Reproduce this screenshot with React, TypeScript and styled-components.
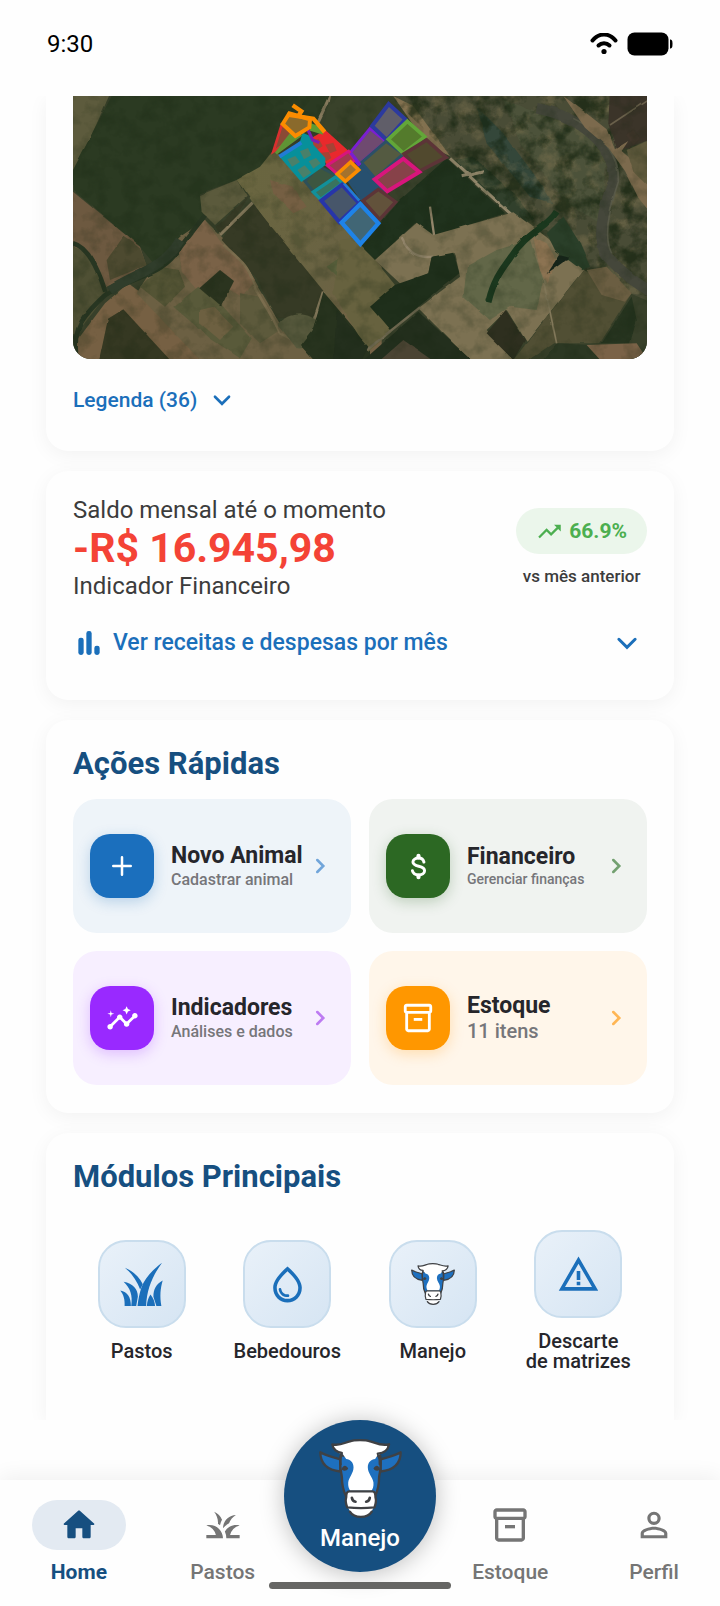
import React from "react";
import styled, { createGlobalStyle } from "styled-components";
import {
  MdGrass,
  MdInsights,
  MdOutlineInventory2,
  MdOutlineWaterDrop,
  MdPersonOutline,
  MdTrendingUp,
  MdWarningAmber,
} from "react-icons/md";

const GlobalStyle = createGlobalStyle`
  * {
    box-sizing: border-box;
  }
  body {
    margin: 0;
    background: #fefefe;
    color: #26262b;
    font-family: Roboto, "Liberation Sans", sans-serif;
  }
  h2, p {
    margin: 0;
  }
  button {
    border: 0;
    padding: 0;
    background: none;
    color: inherit;
    font: inherit;
    text-align: left;
    cursor: pointer;
  }
  a {
    color: inherit;
    text-decoration: none;
  }
  svg {
    display: block;
    flex-shrink: 0;
  }
`;

const Screen = styled.div`
  display: flex;
  flex-direction: column;
  min-height: 100vh;
`;

const StatusBar = styled.header`
  display: flex;
  align-items: center;
  justify-content: space-between;
  height: 96px;
  padding: 0 47px 8px;
  color: #000;
  font-size: 24px;
`;

const StatusIcons = styled.div`
  display: flex;
  align-items: center;
  gap: 9px;
`;

const Content = styled.main`
  flex: 1;
  display: flex;
  flex-direction: column;
  gap: 20px;
  padding: 0 46px;
  overflow: hidden;
`;

const Card = styled.section`
  padding: 26px 27px 28px;
  border-radius: 22px;
  background: #fefefe;
  box-shadow: 0 4px 20px rgba(0, 0, 0, 0.05);
`;

const MapCard = styled(Card)`
  padding-top: 0;
  padding-bottom: 36px;
  border-top-left-radius: 0;
  border-top-right-radius: 0;
`;

const BalanceCard = styled(Card)`
  padding-top: 25px;
  padding-bottom: 40px;
`;

const ModulesCard = styled(Card)`
  flex: 1;
  border-bottom-left-radius: 0;
  border-bottom-right-radius: 0;
`;

const MapFrame = styled.div`
  overflow: hidden;
  border-radius: 0 0 18px 18px;
  svg {
    width: 100%;
    height: auto;
  }
`;

const LegendButton = styled.button`
  display: flex;
  align-items: center;
  gap: 12px;
  margin-top: 26px;
  color: #1b6fba;
  font-size: 21px;
  font-weight: 500;
  line-height: 30px;
`;

const Balance = styled.div`
  display: flex;
  align-items: center;
  justify-content: space-between;
  color: #3c3c3c;
  font-size: 24px;
  line-height: 28px;
`;

const Amount = styled.p`
  color: #f44336;
  font-size: 41px;
  font-weight: 700;
  line-height: 48px;
`;

const Trend = styled.div`
  display: flex;
  flex-direction: column;
  align-items: center;
  gap: 8px;
  padding-top: 2px;
  font-size: 17px;
  font-weight: 500;
`;

const TrendBadge = styled.div`
  display: flex;
  align-items: center;
  gap: 6px;
  height: 46px;
  padding: 0 20px;
  border-radius: 23px;
  background: #ebf6eb;
  color: #4caf50;
  font-size: 21px;
  font-weight: 700;
`;

const DetailsButton = styled.button`
  display: flex;
  align-items: center;
  gap: 8px;
  width: 100%;
  margin-top: 26px;
  padding-right: 5px;
  color: #1b6fba;
  font-size: 23px;
  font-weight: 500;
  line-height: 34px;
  span {
    flex: 1;
  }
`;

const Heading = styled.h2`
  color: #164f80;
  font-size: 31px;
  font-weight: 700;
  line-height: 35px;
`;

const ActionGrid = styled.div`
  display: grid;
  grid-template-columns: repeat(2, minmax(0, 1fr));
  gap: 18px;
  margin-top: 18px;
`;

const Action = styled.button<{ $tint: string }>`
  display: flex;
  align-items: center;
  height: 134px;
  padding: 0 18px 0 17px;
  border-radius: 24px;
  background: ${({ $tint }) => $tint};
`;

const ActionIcon = styled.span<{ $color: string }>`
  display: flex;
  align-items: center;
  justify-content: center;
  width: 64px;
  height: 64px;
  margin-right: 17px;
  flex-shrink: 0;
  border-radius: 20px;
  background: ${({ $color }) => $color};
  box-shadow: 0 4px 14px ${({ $color }) => $color}40;
  color: #fff;
`;

const ActionText = styled.span`
  flex: 1;
  display: flex;
  flex-direction: column;
  white-space: nowrap;
`;

const ActionTitle = styled.span`
  font-size: 23px;
  font-weight: 700;
  line-height: 26px;
`;

const ActionNote = styled.span<{ $size: number }>`
  color: #76767a;
  font-size: ${({ $size }) => $size}px;
  font-weight: 500;
  line-height: ${({ $size }) => $size + 5}px;
`;

const ModuleList = styled.div`
  display: grid;
  grid-template-columns: repeat(4, 1fr);
  align-items: center;
  margin: 36px -4px 0;
`;

const Module = styled.a`
  display: flex;
  flex-direction: column;
  align-items: center;
  gap: 13px;
  font-size: 20px;
  font-weight: 500;
  line-height: 20px;
  text-align: center;
  white-space: pre-line;
`;

const ModuleIcon = styled.span`
  display: flex;
  align-items: center;
  justify-content: center;
  width: 88px;
  height: 88px;
  border: 2px solid #c9dded;
  border-radius: 28px;
  background: linear-gradient(135deg, #e9f1f9, #d6e5f3);
  color: #1b6fba;
`;

const BottomArea = styled.footer`
  position: relative;
  padding-top: 60px;
`;

const NavBar = styled.nav`
  height: 126px;
  overflow: hidden;
  background: #fefefe;
  box-shadow: 0 -4px 20px rgba(0, 0, 0, 0.06);
`;

const NavItems = styled.div`
  display: grid;
  grid-template-columns: repeat(5, 1fr);
  margin: 0 -6px 0 7px;
  padding-top: 20px;
`;

const NavLink = styled.a<{ $active?: boolean }>`
  display: flex;
  flex-direction: column;
  align-items: center;
  gap: 10px;
  color: ${({ $active }) => ($active ? "#164f80" : "#757575")};
  font-size: 21px;
  font-weight: ${({ $active }) => ($active ? 700 : 500)};
  line-height: 24px;
`;

const NavIcon = styled.span<{ $active?: boolean }>`
  display: flex;
  align-items: center;
  justify-content: center;
  width: 94px;
  height: 50px;
  border-radius: 25px;
  background: ${({ $active }) => ($active ? "#e3eaf2" : "transparent")};
`;

const ManejoButton = styled.button`
  position: absolute;
  top: 0;
  left: 50%;
  display: flex;
  flex-direction: column;
  align-items: center;
  gap: 4px;
  width: 152px;
  height: 152px;
  margin-left: -76px;
  padding-top: 17px;
  border-radius: 50%;
  background: #164f80;
  box-shadow: 0 2px 24px rgba(0, 0, 0, 0.26);
  color: #fff;
  font-size: 24px;
  font-weight: 500;
  line-height: 28px;
`;

const HomeIndicator = styled.div`
  position: absolute;
  bottom: 17px;
  left: 50%;
  width: 182px;
  height: 7px;
  margin-left: -91px;
  border-radius: 4px;
  background: #666664;
`;

type IconProps = { size: number };

const WifiIcon = () => (
  <svg width="28" height="22" viewBox="0 0 28 22" fill="none" stroke="#000" strokeWidth="4" strokeLinecap="round">
    <path d="M2.500 7.500C9-.5 19-.5 25.500 7.500" />
    <path d="M8.500 12.500C11.500 9.500 16.500 9.500 19.500 12.500" />
    <circle cx="14" cy="18.500" r="2.600" fill="#000" stroke="none" />
  </svg>
);

const BatteryIcon = () => (
  <svg width="46" height="24" viewBox="0 0 46 24">
    <rect x="0.500" y="0.500" width="41" height="23" rx="7" />
    <path d="M43 7.500c1.800 0 2.500 1 2.500 4.500s-.7 4.500-2.500 4.500z" />
  </svg>
);

const Chevron = ({ size, right, color = "currentColor" }: IconProps & { right?: boolean; color?: string }) => (
  <svg width={size} height={size} viewBox="0 0 24 24" fill="none" stroke={color} strokeWidth="2.400">
    <path d={right ? "M9.500 6.500 15 12l-5.500 5.500" : "M5.500 9l6.500 6.500L18.500 9"} strokeLinecap="round" />
  </svg>
);

const BarsIcon = ({ size }: IconProps) => (
  <svg width={size} height={size} viewBox="0 0 24 24" fill="currentColor">
    <rect x="4" y="8" width="4" height="13" rx="1.800" />
    <rect x="10" y="3" width="4" height="18" rx="1.800" />
    <rect x="16" y="14" width="4" height="7" rx="1.800" />
  </svg>
);

const PlusIcon = ({ size }: IconProps) => (
  <svg width={size} height={size} viewBox="0 0 24 24" stroke="currentColor" strokeWidth="2" strokeLinecap="round">
    <path d="M12 5v14M5 12h14" />
  </svg>
);

const DollarIcon = ({ size }: IconProps) => (
  <svg width={size} height={size} viewBox="0 0 24 24" fill="none" stroke="currentColor" strokeWidth="2.300" strokeLinecap="round">
    <path d="M16.200 8.600C15.800 6.800 14.200 5.500 12 5.500c-2.300 0-4.300 1.100-4.300 3.100 0 4.300 9 2.200 9 6.600 0 2-2 3.300-4.600 3.300-2.400 0-4.300-1.100-4.800-3.200" />
    <path d="M12 3.700v1.200M12 19.100v1.200" strokeWidth="3.200" />
  </svg>
);

const HomeIcon = ({ size }: IconProps) => (
  <svg width={size} height={size} viewBox="0 0 24 24" fill="currentColor">
    <path d="M10 19v-5h4v5c0 .55.45 1 1 1h3c.55 0 1-.45 1-1v-7h1.700c.46 0 .68-.57.33-.87L12.670 3.600c-.38-.34-.96-.34-1.340 0l-8.360 7.530c-.34.3-.13.87.33.87H5v7c0 .55.45 1 1 1h3c.55 0 1-.45 1-1z" />
  </svg>
);

const PastureIcon = ({ size }: IconProps) => (
  <svg width={size} height={size} viewBox="240 425 132 136" fill="currentColor">
    <path d="M368 427c-32 24-52 48-62 74-6 18-10 38-12 57h26c2-52 20-92 48-131z" />
    <path d="M256 442c25 10 43 29 54 50l-8 16c-10-26-25-48-46-66z" />
    <path d="M252 485c28 5 43 22 43 44l-5 29h-15c5-32-3-54-23-73z" />
    <path d="M242 511c22 4 32 20 32 47h-19c1-20-3-34-13-47z" />
    <path d="M370 481c-20 11-28 27-28 49l9 28h15c-5-30-3-53 4-77z" />
    <path d="M333 523c9 11 13 22 14 35h-25c1-13 4-24 11-35z" />
  </svg>
);

const CowIcon = ({ size }: IconProps) => (
  <svg width={size} height={size} viewBox="28 28 250 242" strokeLinecap="round" strokeLinejoin="round">
    <g fill="#1e70bf" stroke="#3f4144" strokeWidth="7">
      <path d="M94 92C75 84 55 84 32 70c0 32 18 53 60 58z" />
      <path d="M212 92c19-8 39-8 62-22 0 32-18 53-60 58z" />
      <path d="M94 80c-6 24 0 44 3 65 0 22 4 40 12 56h88c8-16 12-34 12-56 3-21 9-41 3-65z" />
    </g>
    <path
      d="M68 46c22 6 37-5 53-9 12-5 49-5 61 0 16 4 31 15 57 9-3 18-17 28-34 32l-8 12c-12 1-22 10-22 25 0 18 15 30 17 46 1 12-2 19-6 25h-64c-4-7-7-14-6-25 2-16 16-28 16-46 0-15-10-24-22-25l-10-14C86 74 73 64 68 46z"
      fill="#fff"
    />
    <path
      d="M93 106c-3-18 0-26 4-34-14-1-27-11-29-26 22 6 37-5 53-9 12-5 49-5 61 0 16 4 31 15 57 9-3 18-17 28-34 28 4 10 8 18 6 32"
      fill="none"
      stroke="#3f4144"
      strokeWidth="7"
    />
    <path d="M97 118c4-10 13-11 19 1-4 7-12 9-19 4zM211 118c-4-10-13-11-19 1 4 7 12 9 19 4z" fill="#3f4144" />
    <path d="M119 188h70c6 0 9 8 9 17 4 13 0 27-7 34-9 20-23 26-37 26s-28-6-37-26c-7-7-11-21-7-34 0-9 3-17 9-17z" fill="#fff" />
    <g fill="none" stroke="#3f4144" strokeWidth="7">
      <path d="M119 188h70c6 0 9 8 9 17 4 13 0 23-3 31-25 3-57 3-82 0-3-8-7-18-3-31 0-9 3-17 9-17z" />
      <path d="M121 249c13 21 53 21 66 0" />
      <path d="M127 207c1 7 5 11 11 12M181 207c-1 7-5 11-11 12" strokeWidth="8" />
    </g>
  </svg>
);

// Aerial view of the farm, with the fields drawn over the terrain.
const FarmMap = () => (
  <svg viewBox="99 48 1722 789" role="img" aria-label="Mapa da fazenda">
    <defs>
      <filter id="soften" x="0" y="0" width="100%" height="100%" colorInterpolationFilters="sRGB">
        <feTurbulence type="fractalNoise" baseFrequency="0.02" numOctaves="2" seed="4" result="n" />
        <feDisplacementMap in="SourceGraphic" in2="n" scale="8" xChannelSelector="R" yChannelSelector="G" />
        <feGaussianBlur stdDeviation="2" />
      </filter>
      <filter id="grain" x="0" y="0" width="100%" height="100%" colorInterpolationFilters="sRGB">
        <feTurbulence type="fractalNoise" baseFrequency="0.02" numOctaves="4" seed="8" />
        <feColorMatrix values="0 0 0 0 .08  0 0 0 0 .14  0 0 0 0 .06  3 0 0 0 -1.300" />
      </filter>
      <filter id="patches" x="0" y="0" width="100%" height="100%" colorInterpolationFilters="sRGB">
        <feTurbulence type="fractalNoise" baseFrequency="0.018" numOctaves="5" seed="21" />
        <feColorMatrix values="0 0 0 0 .52  0 0 0 0 .47  0 0 0 0 .33  0 4 0 0 -1.950" />
      </filter>
      <clipPath id="wood">
        <path d="M1050 48h771v600l-51-8-140-70-160-120-240-225z" />
      </clipPath>
      <linearGradient id="band" x1="0" y1="0" x2="1" y2="1">
        <stop offset="0" stopColor="#69663f" />
        <stop offset=".6" stopColor="#6a6343" />
        <stop offset="1" stopColor="#786246" />
      </linearGradient>
    </defs>
    <rect x="99" y="48" width="1722" height="789" fill="#38402a" />
    <g filter="url(#soften)">
      <rect x="80" y="30" width="1760" height="830" fill="#38402a" />
      <path d="M80 30h135L99 290H80z" fill="#5d5b3d" />
      <path d="M215 48h655l-40 80-140 92-30 45-70 35-110 40 10 70-60 60-90 80-40-50L99 330v-60z" fill="#2b3a22" />
      <path d="M99 335l201 165 20 60-130 62L80 470V335z" fill="#6d5940" />
      <path d="M250 470l50 35 20 50-110 45-10-60z" fill="#4d4a30" />
      <path d="M80 490l65 30 45 80 5 50-96 125z" fill="#4f5034" />
      <path d="M195 670l70-60 80 60 60 40 80 140H120l-15-60z" fill="#766043" />
      <path d="M250 688l148 160H176l28-132z" fill="#353822" />
      <path d="M340 560l80-90 75-50 110 110 50 90 70 120 130 100H480L290 640z" fill="#6c6043" />
      <path d="M415 490l80-70 50 70 70 60 30 50-40 50-60-35-70 20-50-60z" fill="#7a6247" />
      <path d="M300 620l60-60 55 10 20 50-60 60z" fill="#545435" />
      <path d="M400 680l75-60 70 55 90 100-35 60-90-60z" fill="#595a3a" />
      <path d="M480 690l40-10 60 60-40 40-60-50z" fill="#6d6041" />
      <path d="M540 570l42 33-39 77-65-55z" fill="#2b341f" />
      <path d="M600 640l60 10 60 100-60 40-60-60z" fill="#5d5a3c" />
      <path d="M480 345l110-45 30 50-95 85-40-40z" fill="#5b5a3c" />
      <path d="M590 300l70-40 45-55 20 25 300 330v290H990l-350-480z" fill="url(#band)" />
      <path d="M690 300l70 20 40 60-40 20-60-60z" fill="#755f43" />
      <path d="M860 560l70-50 90 90v100l-60-40z" fill="#59603c" />
      <path d="M625 350L530 440l12 22 95-92 213 262-30 80-110 3-60-120-105-115z" fill="#363a25" />
      <path d="M638 368L540 465M870 48l-35 75M850 635l-28 85-40 70" fill="none" stroke="#84785b" strokeWidth="9" />
      <path d="M550 495c50 45 75 60 90 115 25 60 50 80 80 150l60 30" fill="none" stroke="#7b6d4e" strokeWidth="8" />
      <path d="M715 735c30-45 100-40 125 0 5 40-30 75-70 70z" fill="#56583c" />
      <path d="M850 635l140 165v50H830l-50-55 40-50z" fill="#27331e" />
      <path d="M110 836c-15-90 20-130 85-190 80-60 170-50 230-150l70-90M99 490c40 10 70 60 97 145" fill="none" stroke="#283622" strokeWidth="14" />
      <path d="M210 630c70-50 160-60 210-150" fill="none" stroke="#303d2b" strokeWidth="28" />
      <path d="M870 48h190l-130 170-80-70z" fill="#39422a" />
      <g transform="translate(900 0)">
        <path d="M0 480l60-10 45 70 60 75-70 65 60 75-70 60L-20 640z" fill="#67623f" />
        <path d="M150 30h790v640l-70-30-140-70-110-120-50-5L330 230l-70-60z" fill="#494c36" />
        <path d="M120 430l60-70 140-125 175 165-215 68-55-38-120 110-45-45z" fill="#20321d" />
        <path d="M340 240l60-10 130 120 50 70-30 15z" fill="#31402c" />
        <path d="M490 60l120 40 110 20 80 110-20 200-100-60-140-180z" fill="#4c523a" />
        <path d="M410 80l80 80 90 120 60 90-70-20-130-160z" fill="#34473a" />
        <path d="M160 48l60 30 110 150-45-20-70-80z" fill="#82704f" />
      </g>
    </g>
    <g clipPath="url(#wood)">
      <rect x="99" y="48" width="1722" height="789" filter="url(#patches)" opacity=".42" />
      <rect x="99" y="48" width="1722" height="789" filter="url(#grain)" opacity=".6" />
    </g>
    <g filter="url(#soften)">
      <g transform="translate(900 0)">
        <path d="M590 85c130 25 235 110 232 215-40 100-50 190-20 230 50 55 90 80 130 105" fill="none" stroke="#45473b" strokeWidth="32" />
        <path d="M700 115c80 40 140 110 135 190-30 90-45 170-20 215" fill="none" stroke="#585948" strokeWidth="5" />
        <path d="M810 30h130v145l-110 40-25-85z" fill="#3b3429" />
        <path d="M810 135L920 62" stroke="#6a604b" strokeWidth="5" />
        <path d="M670 48l80 60 50 40 25 60 40-25-20 30 90 80v110l-40-50-40-80-50-70-70-60z" fill="#7c6a4d" />
        <path d="M860 210l80-35v160l-60-60z" fill="#605a3d" />
        <path d="M858 165l22-15 20 25-20 20z" fill="#3f352a" />
        <path d="M330 235l240 220M365 290l65-15" fill="none" stroke="#91866a" strokeWidth="9" />
        <path d="M105 540l125-112 50 37 240-68 100 75 110 98-170 215-60-95-60 60 80 90H390L235 685l125-95-15-70-70 10-10 50-80 35z" fill="#7c7152" />
        <path d="M380 560l90-50 100-30 40 120-20 90-80-10-60 40-80-70z" fill="#626748" />
        <path d="M580 470l40 20 30 50-30 70-20-40z" fill="#8c7352" />
        <path d="M185 475c20 45 50 60 95 55M270 380l12 85" fill="none" stroke="#94866b" strokeWidth="7" />
        <path d="M275 530l65-12 18 62-123 100-85 70-60-70 75-65 100-35z" fill="#1f2f1b" />
        <path d="M80 810L240 682" stroke="#706951" strokeWidth="7" />
        <path d="M235 695l170 155H60z" fill="#232f1d" />
        <path d="M190 780l100 70H110z" fill="#4b4433" />
        <path d="M-10 690l95 110-25 50h-80z" fill="#232f1d" />
        <path d="M497 690l58 90-35 60-80-80z" fill="#2e2f1f" />
        <path d="M620 460l50-50 50 80 30 70-25 10-80-60z" fill="#2a3f29" />
        <path d="M730 570l145 70-95 150H640l-90 60-30-10z" fill="#514f34" />
        <path d="M740 570l60-10 75 80-20 25-70-20z" fill="#6b5e42" />
        <path d="M875 650l15 70-20 70h-85z" fill="#26341f" />
        <path d="M650 790l90 5 50 55H600z" fill="#2c3823" />
        <path d="M740 795l150-5 40 60H790z" fill="#7a6247" />
        <path d="M610 600l40 190" stroke="#82785a" strokeWidth="5" />
        <path d="M650 395c-30 50-90 60-140 140-30 40-50 70-65 132" fill="none" stroke="#1b381e" strokeWidth="19" />
        <path d="M620 582l40-60 32 8z" fill="#17251a" />
      </g>
    </g>
    <rect x="99" y="48" width="1722" height="789" filter="url(#grain)" opacity=".22" />
    <g transform="translate(630 30)" strokeWidth="12" strokeLinejoin="miter">
      <path d="M95 105L70 185l75-50z" fill="#8a4a35" stroke="#d9302f" strokeWidth="8" />
      <path d="M78 190l72-53-22-12z" fill="#5f9434" stroke="#5f9434" strokeWidth="8" />
      <path d="M360 116l48 38-82 70-28-33z" fill="#6f4a70" stroke="#7b1fd0" strokeWidth="9" />
      <path d="M416 42l50 46-56 62-44-42z" fill="#605e69" stroke="#2c3a9e" />
      <path d="M408 154l52 38-84 74-42-48z" fill="#545a41" stroke="#2c5067" strokeWidth="9" />
      <path d="M472 94l52 46-64 50-45-42z" fill="#547b2c" stroke="#62a638" strokeWidth="11" />
      <path d="M530 150l58 52-80 42-46-52z" fill="#51492e" stroke="#5c3437" strokeWidth="11" />
      <path d="M340 224l36 44 36 32-72 36-50-72z" fill="#27506f" stroke="#28506e" strokeWidth="8" />
      <path d="M385 298l52 38-48 52-50-56z" fill="#62523b" stroke="#5c3437" strokeWidth="10" />
      <path d="M374 268l86-62 48 40-96 58z" fill="#874249" stroke="#d8157c" />
      <path d="M205 228l56 30-68 50-28-34z" fill="#3d5640" stroke="#2e5059" strokeWidth="9" />
      <path d="M258 260l20 20-66 48-22-22z" fill="#39735e" stroke="#12909a" strokeWidth="10" />
      <path d="M276 284l52 56-60 56-54-64z" fill="#47566a" stroke="#2735a9" />
      <path d="M282 280l46 52" stroke="#227bd5" strokeWidth="8" />
      <path d="M174 150l52-30 80 72-70 40-14-20z" fill="#e9292c" />
      <path d="M182 154l24-8 12 22-20 14zM226 164l24-6 10 24-20 8zM212 188l24-2 8 18-16 10z" fill="#a64335" />
      <path d="M232 226l64-42 20 26-54 42z" fill="#a2384f" stroke="#d8157c" strokeWidth="9" />
      <path d="M302 188l28 36" stroke="#7b1fd0" strokeWidth="10" />
      <path d="M302 216l24 24-40 34-24-22z" fill="#a4722d" stroke="#fb8c00" strokeWidth="11" />
      <path d="M158 128l28 12 4 24 36 40 0 22-72 50-64-74 60-48z" fill="#07909a" />
      <path d="M88 200l66-42" stroke="#227bd5" strokeWidth="12" />
      <path d="M112 208l24-10 14 18-24 14zM150 184l24-10 10 22-22 12zM142 240l22-14 20 22-24 16zM176 214l22-10 14 16-22 16z" fill="#49806a" />
      <path d="M174 120l14 30 20 8" fill="none" stroke="#7b1fb0" strokeWidth="9" />
      <path d="M180 98l30 12 10 24-40-12z" fill="#5d9b33" />
      <path d="M98 102l20-32 62 18-2 24-42 26z" fill="#8a6a2c" stroke="#fb8c00" strokeWidth="12" />
      <path d="M128 46l26 18-8 12M112 74l78 12 34 40" fill="none" stroke="#fb8c00" strokeWidth="13" />
      <path d="M331 342l54 58-54 62-56-64z" fill="#416675" stroke="#1e83e8" strokeWidth="13" />
    </g>
  </svg>
);

const actions = [
  { title: "Novo Animal", note: "Cadastrar animal", size: 16, color: "#1b6fbd", tint: "#eef4f9", arrow: "#71a5da", icon: <PlusIcon size={30} /> },
  { title: "Financeiro", note: "Gerenciar finanças", size: 14, color: "#2c6823", tint: "#f0f3f0", arrow: "#73a070", icon: <DollarIcon size={31} /> },
  { title: "Indicadores", note: "Análises e dados", size: 16, color: "#9929ff", tint: "#f7efff", arrow: "#bd7bf2", icon: <MdInsights size={33} /> },
  { title: "Estoque", note: "11 itens", size: 20, color: "#ff9700", tint: "#fff6ea", arrow: "#ffb654", icon: <MdOutlineInventory2 size={34} /> },
];

const modules = [
  { name: "Pastos", icon: <PastureIcon size={45} /> },
  { name: "Bebedouros", icon: <MdOutlineWaterDrop size={43} /> },
  { name: "Manejo", icon: <CowIcon size={44} /> },
  { name: "Descarte\nde matrizes", icon: <MdWarningAmber size={43} /> },
];

const App = () => {
  return (
    <Screen>
      <GlobalStyle />
      <StatusBar>
        <span>9:30</span>
        <StatusIcons>
          <WifiIcon />
          <BatteryIcon />
        </StatusIcons>
      </StatusBar>

      <Content>
        <MapCard>
          <MapFrame>
            <FarmMap />
          </MapFrame>
          <LegendButton type="button">
            Legenda (36)
            <Chevron size={26} />
          </LegendButton>
        </MapCard>

        <BalanceCard>
          <Balance>
            <div>
              <p>Saldo mensal até o momento</p>
              <Amount>-R$ 16.945,98</Amount>
              <p>Indicador Financeiro</p>
            </div>
            <Trend>
              <TrendBadge>
                <MdTrendingUp size={27} />
                66.9%
              </TrendBadge>
              vs mês anterior
            </Trend>
          </Balance>
          <DetailsButton type="button">
            <BarsIcon size={32} />
            <span>Ver receitas e despesas por mês</span>
            <Chevron size={30} />
          </DetailsButton>
        </BalanceCard>

        <Card>
          <Heading>Ações Rápidas</Heading>
          <ActionGrid>
            {actions.map((action) => (
              <Action key={action.title} type="button" $tint={action.tint}>
                <ActionIcon $color={action.color}>{action.icon}</ActionIcon>
                <ActionText>
                  <ActionTitle>{action.title}</ActionTitle>
                  <ActionNote $size={action.size}>{action.note}</ActionNote>
                </ActionText>
                <Chevron size={26} right color={action.arrow} />
              </Action>
            ))}
          </ActionGrid>
        </Card>

        <ModulesCard>
          <Heading>Módulos Principais</Heading>
          <ModuleList>
            {modules.map((item) => (
              <Module key={item.name} href="#">
                <ModuleIcon>{item.icon}</ModuleIcon>
                {item.name}
              </Module>
            ))}
          </ModuleList>
        </ModulesCard>
      </Content>

      <BottomArea>
        <NavBar>
          <NavItems>
            <NavLink href="#" $active>
              <NavIcon $active>
                <HomeIcon size={40} />
              </NavIcon>
              Home
            </NavLink>
            <NavLink href="#">
              <NavIcon>
                <MdGrass size={40} />
              </NavIcon>
              Pastos
            </NavLink>
            <span />
            <NavLink href="#">
              <NavIcon>
                <MdOutlineInventory2 size={40} />
              </NavIcon>
              Estoque
            </NavLink>
            <NavLink href="#">
              <NavIcon>
                <MdPersonOutline size={40} />
              </NavIcon>
              Perfil
            </NavLink>
          </NavItems>
        </NavBar>
        <ManejoButton type="button">
          <CowIcon size={83} />
          Manejo
        </ManejoButton>
        <HomeIndicator />
      </BottomArea>
    </Screen>
  );
};

export default App;
